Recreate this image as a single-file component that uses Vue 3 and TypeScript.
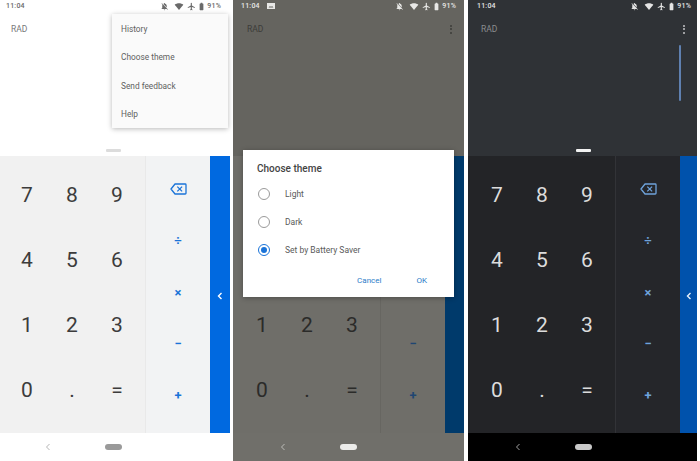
<script setup lang="ts">
interface Phone {
  theme: string
  overflow: boolean
  picture: boolean
  menu: boolean
  dialog: boolean
  scrollbar: boolean
}

const phones: Phone[] = [
  { theme: 'light', overflow: false, picture: false, menu: true, dialog: false, scrollbar: false },
  { theme: 'dimmed', overflow: true, picture: true, menu: false, dialog: true, scrollbar: false },
  { theme: 'dark', overflow: true, picture: false, menu: false, dialog: false, scrollbar: true },
]

const statusIcons = [
  { w: 9, gap: 5, path: 'M20 18.69L7.84 6.14 5.27 3.49 4 4.76l2.8 2.8v.01c-.52.99-.8 2.16-.8 3.42v5l-2 2v1h13.73l2 2L21 19.72l-1-1.03zM12 22c1.11 0 2-.89 2-2h-4c0 1.11.89 2 2 2zm6-7.32V11c0-3.08-1.64-5.64-4.5-6.32V4c0-.83-.67-1.5-1.5-1.5s-1.5.67-1.5 1.5v.68c-.15.03-.29.08-.42.12-.1.03-.2.07-.3.11-.2.08-.4.17-.59.27L18 14.68z' },
  { w: 10, gap: 3, path: 'M12 21L.5 7.5C3.6 5 7.6 3.5 12 3.5s8.4 1.5 11.5 4L12 21z' },
  { w: 9, gap: 1, path: 'M21 16v-2l-8-5V3.5c0-.83-.67-1.5-1.5-1.5S10 2.67 10 3.5V9l-8 5v2l8-2.5V19l-2 1.5V22l3.5-1 3.5 1v-1.5L13 19v-5.5l8 2.5z' },
  { w: 9, gap: 1, path: 'M15.67 4H14V2h-4v2H8.33C7.6 4 7 4.6 7 5.33v15.33C7 21.4 7.6 22 8.33 22h7.33c.74 0 1.34-.6 1.34-1.33V5.33C17 4.6 16.4 4 15.67 4z' },
]

const digits = ['7', '8', '9', '4', '5', '6', '1', '2', '3', '0', '.', '=']
const operators = ['÷', '×', '−', '+']
const menuItems = ['History', 'Choose theme', 'Send feedback', 'Help']
const themeOptions = [
  { label: 'Light', selected: false },
  { label: 'Dark', selected: false },
  { label: 'Set by Battery Saver', selected: true },
]
</script>

<template>
  <div class="sheet">
    <section v-for="phone in phones" :key="phone.theme" class="phone" :class="phone.theme">
      <div class="display">
        <header class="status">
          <span class="time">11:04</span>
          <svg v-if="phone.picture" class="picture" viewBox="0 0 8 8">
            <path d="M0 1h8v6H0z" fill="currentColor" />
            <path d="M1.5 5.5l1.5-1.5 1 1 1-1 1.500 1.500z" fill="#65645f" />
          </svg>
          <span class="spacer"></span>
          <svg
            v-for="icon in statusIcons"
            :key="icon.path"
            class="status-icon"
            :style="{ width: icon.w + 'px', marginRight: icon.gap + 'px' }"
            viewBox="0 0 24 24"
          >
            <path :d="icon.path" fill="currentColor" />
          </svg>
          <span class="level">91%</span>
        </header>
        <div class="toolbar">
          <span class="rad">RAD</span>
          <span v-if="phone.overflow" class="more"><i></i><i></i><i></i></span>
        </div>
        <span v-if="phone.scrollbar" class="scrollbar"></span>
        <span class="handle"></span>
      </div>

      <div class="pad">
        <div class="digits">
          <button
            v-for="(digit, index) in digits"
            :key="digit"
            class="digit"
            :class="{ covered: phone.dialog && index < 6 }"
          >
            {{ digit }}
          </button>
        </div>
        <div class="ops">
          <span class="op" :class="{ covered: phone.dialog }">
            <svg class="backspace" viewBox="0 0 17 12">
              <path d="M5 1h10.200a.8.8 0 0 1 .8.8v8.400a.8.8 0 0 1-.8.8H5L1 6z" fill="none" stroke="currentColor" stroke-width="1.300" stroke-linejoin="round" />
              <path d="M7.300 3.600l4.800 4.800M12.100 3.600l-4.800 4.800" fill="none" stroke="currentColor" stroke-width="1.300" />
            </svg>
          </span>
          <span
            v-for="(op, index) in operators"
            :key="op"
            class="op"
            :class="{ covered: phone.dialog && index < 2 }"
          >{{ op }}</span>
        </div>
        <div class="drawer">
          <svg v-if="!phone.dialog" class="chevron" viewBox="0 0 6 8">
            <path d="M4.500 1L1.500 4l3 3" fill="none" stroke="currentColor" stroke-width="1.400" />
          </svg>
        </div>
      </div>

      <nav class="nav">
        <svg class="back" viewBox="0 0 6 8">
          <path d="M4.500 1L1.500 4l3 3" fill="none" stroke="currentColor" stroke-width="1" />
        </svg>
        <span class="home"></span>
      </nav>

      <ul v-if="phone.menu" class="menu">
        <li v-for="item in menuItems" :key="item">{{ item }}</li>
      </ul>

      <div v-if="phone.dialog" class="dialog">
        <h2>Choose theme</h2>
        <label v-for="option in themeOptions" :key="option.label" class="option">
          <span class="radio" :class="{ on: option.selected }"></span>
          {{ option.label }}
        </label>
        <div class="actions">
          <span>Cancel</span>
          <span>OK</span>
        </div>
      </div>
    </section>
  </div>
</template>

<style scoped>
.sheet {
  display: flex;
  width: 700px;
  height: 461px;
  overflow: hidden;
  background: #fff;
  font-family: Roboto, "Liberation Sans", sans-serif;
}
.phone {
  position: relative;
  display: flex;
  flex-direction: column;
  height: 461px;
  flex: none;
}
.light {
  --display: #fff;
  --pad: #f1f1f1;
  --ops: #f2f3f4;
  --line: #e9e9e9;
  --drawer: #0069e0;
  --nav: #fff;
  --status: #6a6a6a;
  --rad: #777;
  --digit: #3c3c3c;
  --op: #1a73d8;
  --chev: #fff;
  --home: #9a9a9a;
  --back: #b5b5b5;
  --handle: #dcdcdc;
  width: 230px;
  margin-right: 3px;
  --status-left: 6px;
  --status-right: 9px;
  --rad-left: 11px;
  --digit-left: 4.5px;
  --digits-width: 146px;
  --ops-width: 64px;
  --drawer-width: 20px;
  --back-left: 45px;
  --home-gap: 54px;
  --handle-left: 106px;
}
.dimmed {
  --display: #65645f;
  --pad: #6f6e69;
  --ops: #6f6e69;
  --line: #676661;
  --drawer: #003a6b;
  --nav: #706f6a;
  --status: #e8e8e6;
  --rad: #3c3c39;
  --digit: #2b2b29;
  --op: #1f4672;
  --chev: #6f6e69;
  --home: #ececea;
  --back: #bdbdb9;
  --handle: transparent;
  width: 231px;
  margin-right: 4px;
  --status-left: 8px;
  --status-right: 8px;
  --rad-left: 14px;
  --digit-left: 6.5px;
  --digits-width: 148px;
  --ops-width: 64px;
  --drawer-width: 19px;
  --back-left: 47px;
  --home-gap: 54px;
  --handle-left: 107px;
}
.dark {
  --display: #2f3236;
  --pad: #232427;
  --ops: #25262a;
  --line: #323337;
  --drawer: #0052ac;
  --nav: #000;
  --status: #e4e4e4;
  --rad: #8b8d90;
  --digit: #dcdcdc;
  --op: #6fa3dc;
  --chev: #e8f0fa;
  --home: #c9c9c9;
  --back: #a0a0a0;
  --handle: #f2f2f2;
  width: 229px;
  --status-left: 9px;
  --status-right: 6px;
  --rad-left: 13px;
  --digit-left: 6.5px;
  --digits-width: 148px;
  --ops-width: 64px;
  --drawer-width: 17px;
  --back-left: 47px;
  --home-gap: 54px;
  --handle-left: 108px;
}

.display {
  position: relative;
  height: 156px;
  background: var(--display);
  flex: none;
}
.status {
  display: flex;
  align-items: center;
  height: 12px;
  padding: 0 var(--status-right) 0 var(--status-left);
  color: var(--status);
  font-size: 7px;
  font-weight: 500;
}
.time {
  letter-spacing: 0.2px;
}
.picture {
  width: 8px;
  height: 8px;
  margin-left: 7px;
}
.spacer {
  flex: 1;
}
.status-icon {
  height: 9px;
}
.level {
  color: var(--status);
  letter-spacing: 0.2px;
}
.toolbar {
  display: flex;
  align-items: center;
  justify-content: space-between;
  height: 12px;
  margin-top: 11px;
  padding: 0 12px 0 var(--rad-left);
  color: var(--rad);
  font-size: 8.500px;
  font-weight: 400;
}
.more {
  display: flex;
  flex-direction: column;
  gap: 1.500px;
}
.more i {
  width: 2px;
  height: 2px;
  border-radius: 50%;
  background: var(--rad);
}
.dark .more i {
  background: #c4c5c7;
}
.scrollbar {
  position: absolute;
  top: 45px;
  right: 16px;
  width: 2px;
  height: 56px;
  border-radius: 1px;
  background: #5f80b0;
}
.handle {
  position: absolute;
  top: 149px;
  left: var(--handle-left);
  width: 15px;
  height: 2.500px;
  border-radius: 1px;
  background: var(--handle);
}

.pad {
  display: flex;
  height: 277px;
  background: var(--pad);
  flex: none;
}
.digits {
  display: grid;
  grid-template-columns: repeat(3, 45px);
  grid-auto-rows: 65px;
  box-sizing: border-box;
  width: var(--digits-width);
  padding: 7px 0 10px var(--digit-left);
  border-right: 1px solid var(--line);
}
.digit {
  padding: 0;
  border: 0;
  background: none;
  color: var(--digit);
  font-family: inherit;
  font-size: 21px;
  font-weight: 400;
  line-height: 1;
}
.covered {
  visibility: hidden;
}
.ops {
  display: grid;
  grid-template-rows: repeat(5, 51.700px);
  width: var(--ops-width);
  padding-top: 7px;
  background: var(--ops);
}
.op {
  display: flex;
  align-items: center;
  justify-content: center;
  color: var(--op);
  font-size: 13px;
  font-weight: 700;
  line-height: 1;
}
.backspace {
  width: 17px;
  height: 12px;
}
.drawer {
  display: flex;
  align-items: center;
  justify-content: center;
  width: var(--drawer-width);
  background: var(--drawer);
  color: var(--chev);
}
.chevron {
  width: 6px;
  height: 8px;
  margin-top: 2px;
}
.nav {
  display: flex;
  align-items: center;
  flex: 1;
  padding-left: var(--back-left);
  background: var(--nav);
}
.back {
  width: 6px;
  height: 8px;
  color: var(--back);
}
.home {
  width: 17px;
  height: 6px;
  margin-left: var(--home-gap);
  border-radius: 3px;
  background: var(--home);
}

.menu {
  position: absolute;
  top: 14px;
  left: 112px;
  box-sizing: border-box;
  width: 116px;
  height: 114px;
  margin: 0;
  padding: 1px 0 0;
  list-style: none;
  background: #fafafa;
  box-shadow: 0 1px 5px rgba(0, 0, 0, 0.28);
}
.menu li {
  display: flex;
  align-items: center;
  height: 28.300px;
  padding-left: 9px;
  color: #5f5f5f;
  font-size: 8.300px;
}
.dialog {
  position: absolute;
  top: 150px;
  left: 10px;
  display: flex;
  flex-direction: column;
  box-sizing: border-box;
  width: 211px;
  height: 147px;
  padding: 12px 14px 0;
  background: #fff;
  box-shadow: 0 1px 5px rgba(0, 0, 0, 0.3);
}
.dialog h2 {
  height: 12px;
  margin: 0 0 5px;
  padding-top: 1px;
  color: #444;
  font-size: 10px;
  font-weight: 500;
  line-height: 12px;
}
.option {
  display: flex;
  align-items: center;
  height: 28px;
  color: #5a5a5a;
  font-size: 8.500px;
}
.radio {
  position: relative;
  box-sizing: border-box;
  width: 12px;
  height: 12px;
  margin-right: 15px;
  margin-left: 1px;
  border: 1.300px solid #9a9a9a;
  border-radius: 50%;
}
.radio.on {
  border-color: #1a73d8;
}
.radio.on::after {
  content: "";
  position: absolute;
  inset: 2px;
  border-radius: 50%;
  background: #1a73d8;
}
.actions {
  display: flex;
  justify-content: flex-end;
  gap: 35px;
  margin-top: 12px;
  padding-right: 13px;
  color: #2a7cc9;
  font-size: 8px;
  font-weight: 400;
}
</style>
